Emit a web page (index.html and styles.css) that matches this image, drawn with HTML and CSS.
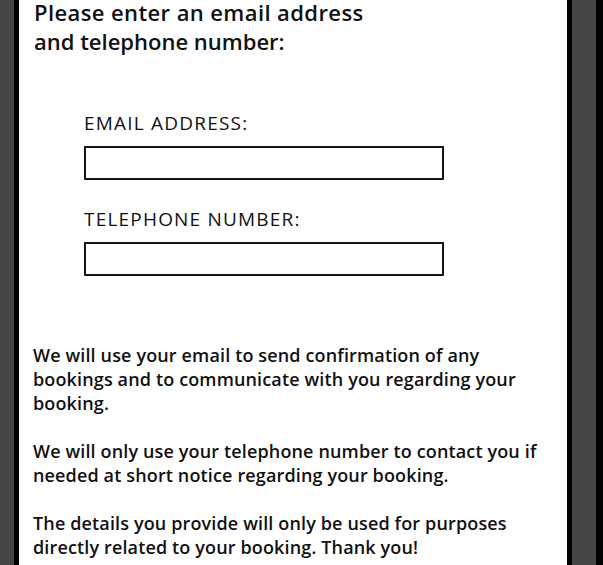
FILE: index.html
```html
<!DOCTYPE html>
<html lang="en">
<head>
<meta charset="utf-8">
<title>Contact details</title>
<link rel="stylesheet" href="styles.css">
</head>
<body>
<div class="screen">
  <div class="gutter-left"></div>
  <main class="panel">
    <h1 class="title"><span>Please enter an email address</span><span>and telephone number:</span></h1>
    <form class="fields">
      <label class="field">
        <span class="field-label">EMAIL ADDRESS:</span>
        <input class="field-input" type="email">
      </label>
      <label class="field">
        <span class="field-label">TELEPHONE NUMBER:</span>
        <input class="field-input" type="tel">
      </label>
    </form>
    <div class="notes">
      <p>We will use your email to send confirmation of any bookings and to communicate with you regarding your booking.</p>
      <p>We will only use your telephone number to contact you if needed at short notice regarding your booking.</p>
      <p>The details you provide will only be used for purposes directly related to your booking. Thank you!</p>
    </div>
  </main>
  <div class="gutter-right"></div>
  <div class="edge"></div>
</div>
</body>
</html>
```
FILE: styles.css
```css
html, body {
  margin: 0;
  padding: 0;
  height: 100%;
  overflow: hidden;
}
body {
  background: #444444;
  font-family: "Open Sans", "Noto Sans", sans-serif;
  color: #111111;
}
.screen {
  display: flex;
  height: 565px;
}
.gutter-left {
  width: 14px;
  flex: none;
  background: #444444;
}
.panel {
  flex: none;
  background: #ffffff;
  border-left: 5px solid #000;
  border-right: 5px solid #000;
  padding: 0 14px 0 14px;
  box-sizing: content-box;
  width: 520px;
  overflow: hidden;
}
.gutter-right {
  width: 24px;
  flex: none;
  background: #444444;
}
.edge {
  flex: 1;
  background: #000;
}
.title {
  margin: 0;
  padding: 0 0 0 1px;
  display: flex;
  flex-direction: column;
  gap: 5px;
  font-size: 22px;
  font-weight: 600;
  line-height: 24px;
}
.title span:first-child {
  letter-spacing: 0.4px;
}
.fields {
  display: flex;
  flex-direction: column;
  gap: 28px;
  padding: 59px 0 0 51px;
}
.field {
  display: flex;
  flex-direction: column;
  gap: 12px;
}
.field-label {
  font-size: 19px;
  font-weight: 400;
  line-height: 22px;
  letter-spacing: 1.2px;
}
.field-input {
  width: 360px;
  height: 34px;
  box-sizing: border-box;
  border: 2px solid #111;
  border-radius: 1px;
  margin: 0;
  padding: 0;
  background: #fff;
}
.notes {
  width: 520px;
  padding: 67px 0 0 0;
  font-size: 18px;
  font-weight: 600;
  line-height: 24px;
  letter-spacing: 0.14px;
}
.notes p {
  margin: 0 0 24px 0;
}
```
